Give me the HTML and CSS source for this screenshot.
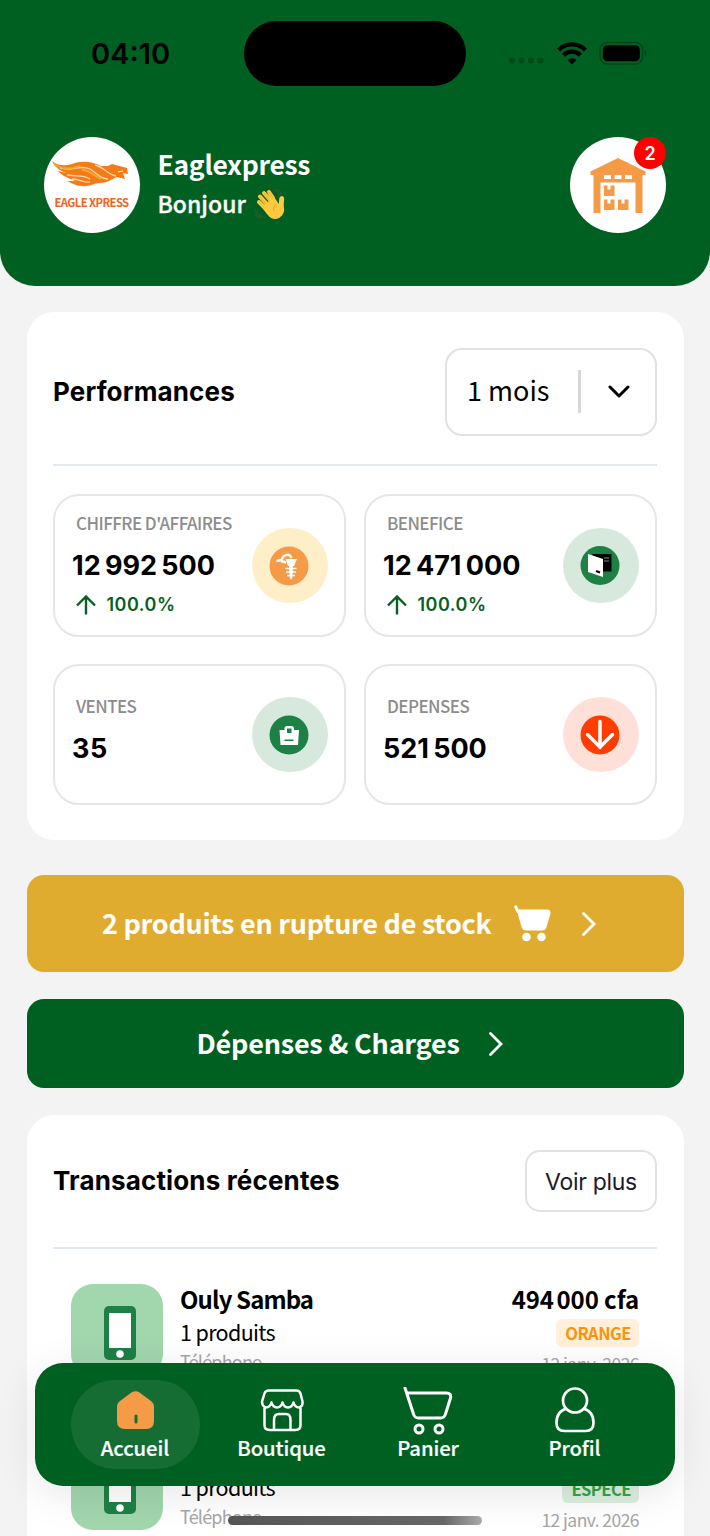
FILE: index.html
```html
<!DOCTYPE html>
<html lang="fr">
<head>
    <meta charset="UTF-8">
    <meta name="viewport" content="width=device-width, initial-scale=1.0">
    <title>Accueil</title>
    <link rel="stylesheet" href="styles.css">
</head>
<body>
    <div class="screen">
        <header class="header">
            <div class="status-bar">
                <span class="time">04:10</span>
                <div class="island"></div>
                <div class="status-icons">
                    <svg width="36" height="24" viewBox="0 0 36 24" fill="#004a1a"><circle cx="3" cy="19.500" r="3"/><circle cx="12.500" cy="19.500" r="3"/><circle cx="22" cy="19.500" r="3"/><circle cx="31.500" cy="19.500" r="3"/></svg>
                    <svg width="30" height="24" viewBox="0 0 30 24" fill="none" stroke="#000" stroke-width="4.200"><path d="M1.600 8.900a19 19 0 0 1 26.800 0"/><path d="M6.500 14.200a12 12 0 0 1 17 0"/><path d="M15 23.600l-4.400-4.500a6.300 6.300 0 0 1 8.800 0z" fill="#000" stroke="none"/></svg>
                    <svg width="50" height="24" viewBox="0 0 50 24"><rect x="1" y="1.500" width="42.500" height="21.500" rx="7" fill="none" stroke="#00451a" stroke-width="1.600"/><rect x="3.800" y="4.200" width="37" height="16" rx="4.500"/><path d="M45.500 9c3.300 1 3.300 5.500 0 6.500z" fill="#00451a"/></svg>
                </div>
            </div>
            <div class="profile">
                <div class="avatar">
                    <svg width="78" height="28" viewBox="0 0 78 28">
                        <path d="M0 0C6 5 13 5 20 3C30-1 42 1 49 5L56 5L60 3L75 7L76 13L71 12L73 18L65 16C58 19 55 22 47 22C40 23 36 26 30 25C24 25 20 22 15 20L23 20C16 17 9 14 6 10L14 12C7 9 3 6 0 0Z" fill="#f47b16"/>
                        <path d="M8 7C22 11 27 3 38 8C46 13 48 18 56 18M15 14C25 16 30 13 38 18M43 4C52 6 56 14 64 15M20 18C29 18 31 22 38 21" fill="none" stroke="#ffd9a6" stroke-width="1.300"/>
                        <path d="M2 3C11 9 19 8 28 5M30 9C39 9 42 15 49 18" fill="none" stroke="#f9a62d" stroke-width="2"/>
                        <path d="M66 11l5-1" stroke="#fff" stroke-width="1.200"/>
                    </svg>
                    <span class="logo-text">EAGLE XPRESS</span>
                </div>
                <div class="greeting">
                    <div class="shop-name">Eaglexpress</div>
                    <div class="hello"><span>Bonjour</span>
                        <svg class="wave" width="32" height="32" viewBox="0 0 32 32" role="img" aria-label="Salut">
                            <g fill="none" stroke-linecap="round">
                                <path d="M16 11L10 4M12 14L6 7.500M19 9L15 3M10 18L5 13" stroke="#ffc83d" stroke-width="4"/>
                                <path d="M18 15L10 4M14 18L6 7.500M21 12L15 3M12 20L5 13" stroke="#e8a01f" stroke-width=".6"/>
                            </g>
                            <path d="M10 16L20 8L25 15C25 10 25 7 28 7C32 8 29 13 30 19C31 25 26 30 21 30C16 30 13 25 9 20Z" fill="#ffc83d"/>
                            <path d="M22 15c-2 2-3 4-2 7" fill="none" stroke="#e8a01f"/>
                            <path d="M19 1c4 1 6 4 7 7M22 0c4 2 5 4 6 6M1 20c1 4 4 7 8 8M1 25c2 3 4 4 6 4" fill="none" stroke="#35552f" stroke-width="1.200"/>
                        </svg>
                    </div>
                </div>
                <div class="stock-button">
                    <svg width="56" height="56" viewBox="0 0 56 56" fill="#f59a46">
                        <path fill-rule="evenodd" d="M28 0L55.500 13.500V17H52.500V55H45.500V24.500H10.500V55H3.500V17H.5V13.500ZM14 17v4h7v-4ZM24.500 17v4h7v-4ZM35 17v4h7v-4Z"/>
                        <path d="M14 27.500h3.500v4h3v-4h4v10.500H14zM14 41.500h3.500v4h3v-4h4V52H14zM28 41.500h3.500v4h3v-4h4V52H28z"/>
                    </svg>
                    <span class="badge">2</span>
                </div>
            </div>
        </header>

        <section class="card performances">
            <div class="card-head">
                <h2>Performances</h2>
                <div class="select">
                    <span class="select-text">1 mois</span>
                    <span class="divider"></span>
                    <svg width="22" height="14" viewBox="0 0 22 14"><path d="M2 2l9 9 9-9" fill="none" stroke="#000" stroke-width="3" stroke-linecap="round" stroke-linejoin="round"/></svg>
                </div>
            </div>
            <div class="stats">
                <div class="stat">
                    <div class="figures">
                        <div class="label">CHIFFRE D'AFFAIRES</div>
                        <div class="value">12&#8239;992&#8239;500</div>
                        <div class="trend"><svg width="20" height="20" viewBox="0 0 20 20"><path d="M10 19.500V1.500M1 10.500L10 1.500 19 10.500" fill="none" stroke="#086020" stroke-width="2.400"/></svg><span>100.0%</span></div>
                    </div>
                    <div class="bubble yellow">
                        <svg width="40" height="40" viewBox="0 0 40 40"><circle cx="20" cy="20" r="19.500" fill="#f59a46"/><path d="M16.500 13H28l-3 7h-6zM20 19h4l-.5 12-1.500 3-1.500-3z" fill="#fff"/><path d="M7.500 15l5-1c2-6 8-7 10-2M12 15l5 1.500" fill="none" stroke="#fff" stroke-width="2.400"/><path d="M16.500 22.500h11M17 26h10M18 29.500h8" fill="none" stroke="#fff" stroke-width="1.500"/></svg>
                    </div>
                </div>
                <div class="stat">
                    <div class="figures">
                        <div class="label">BENEFICE</div>
                        <div class="value">12&#8239;471&#8239;000</div>
                        <div class="trend"><svg width="20" height="20" viewBox="0 0 20 20"><path d="M10 19.500V1.500M1 10.500L10 1.500 19 10.500" fill="none" stroke="#086020" stroke-width="2.400"/></svg><span>100.0%</span></div>
                    </div>
                    <div class="bubble green">
                        <svg width="40" height="40" viewBox="0 0 40 40"><circle cx="20" cy="19.500" r="19.500" fill="#1d8045"/><path d="M12 8h19.500v17.500H22z"/><path d="M8 8l15 5v18L8 26z" fill="#fff"/><path d="M24 12h5M24 15h5" stroke="#7d8a83"/><path d="M16 25l4 1.500" stroke="#000" stroke-width="2"/></svg>
                    </div>
                </div>
                <div class="stat">
                    <div class="figures short">
                        <div class="label">VENTES</div>
                        <div class="value">35</div>
                    </div>
                    <div class="bubble green">
                        <svg width="40" height="40" viewBox="0 0 40 40"><circle cx="20" cy="20" r="19.500" fill="#1d8045"/><path fill-rule="evenodd" d="M10.500 15h5V13.500q0-2.500 2.500-2.500h4.500Q25 11 25 13.500V15h5L29 30H11.500zM18 13.500v4.500h4.500v-4.500zM15.500 24.500v1.500h9v-1.500z" fill="#fff"/></svg>
                    </div>
                </div>
                <div class="stat">
                    <div class="figures short">
                        <div class="label">DEPENSES</div>
                        <div class="value">521&#8239;500</div>
                    </div>
                    <div class="bubble red">
                        <svg width="40" height="40" viewBox="0 0 40 40"><circle cx="20" cy="20" r="19.500" fill="#ff3d00"/><path d="M20 6.500v26M7.500 19.500L20 32l12.500-12.500" fill="none" stroke="#fff" stroke-width="3.500" stroke-linecap="round"/></svg>
                    </div>
                </div>
            </div>
        </section>

        <div class="banner out-of-stock">
            <span class="stock-text">2 produits en rupture de stock</span>
            <svg class="cart" width="37" height="37" viewBox="0 0 37 37" fill="#fff"><path d="M1.800 1.800L3.800 6.500" stroke="#fff" stroke-width="3" stroke-linecap="round"/><path d="M2.500 4.500H33q4 0 3.500 4l-4 13.500q-1 3.500-4 3.500H12q-3 0-4.300-3z"/><circle cx="12.500" cy="32" r="4.300"/><circle cx="27.500" cy="32" r="4.300"/></svg>
            <svg width="14" height="24" viewBox="0 0 14 24"><path d="M1.500 1.500L12 12 1.500 22.500" fill="none" stroke="#fff" stroke-width="2.800" stroke-linecap="round"/></svg>
        </div>

        <div class="banner expenses">
            <span class="expenses-text">Dépenses &amp; Charges</span>
            <svg width="14" height="24" viewBox="0 0 14 24"><path d="M1.500 1.500L12 12 1.500 22.500" fill="none" stroke="#fff" stroke-width="2.800" stroke-linecap="round"/></svg>
        </div>

        <section class="card transactions">
            <div class="card-head">
                <h2>Transactions récentes</h2>
                <div class="more">Voir plus</div>
            </div>
            <div class="row">
                <div class="thumb"><svg width="32" height="54" viewBox="0 0 32 54"><rect width="32" height="54" rx="5" fill="#1d8045"/><path fill="#fff" d="M5 7h22v35H5z"/><circle cx="16" cy="48" r="3.800" fill="#fff"/></svg></div>
                <div class="who">
                    <div class="name">Ouly Samba</div>
                    <div class="qty">1 produits</div>
                    <div class="category">Téléphone</div>
                </div>
                <div class="amounts">
                    <div class="amount">494&#8239;000 cfa</div>
                    <div class="tag orange">ORANGE</div>
                    <div class="date">12 janv. 2026</div>
                </div>
            </div>
            <div class="row">
                <div class="thumb"><svg width="32" height="54" viewBox="0 0 32 54"><rect width="32" height="54" rx="5" fill="#1d8045"/><path fill="#fff" d="M5 7h22v35H5z"/><circle cx="16" cy="48" r="3.800" fill="#fff"/></svg></div>
                <div class="who second">
                    <div class="qty">1 produits</div>
                    <div class="category">Téléphone</div>
                </div>
                <div class="amounts second">
                    <div class="tag cash">ESPECE</div>
                    <div class="date">12 janv. 2026</div>
                </div>
            </div>
        </section>

        <nav class="tab-bar">
            <div class="tab active">
                <svg width="44" height="48" viewBox="0 0 44 48"><path d="M4 20q0-4 3-6L18.500 5.500q4-2.500 8 0L38 14q3 2 3 6v14q0 8-8 8H12q-8 0-8-8z" fill="#f59a46"/><path d="M23 29v6" stroke="#156d34" stroke-width="3" stroke-linecap="round"/></svg>
                <span>Accueil</span>
            </div>
            <div class="tab">
                <svg width="44" height="48" viewBox="0 0 44 48" fill="none" stroke="#fff" stroke-width="2.500" stroke-linejoin="round"><path d="M9.500 3.500h27q3 0 4 3l2 8q.5 5-3.500 6-4 0-5.500-5-1.500 5-5.500 5t-5.500-5q-1.500 5-5.500 5t-5.500-5q-1.500 5-5.500 5-4-1-4-6l2.500-8q1-3 4-3zM4.500 21v17q0 5 5 5h26q5 0 5-5V21M14 43V33q0-6 5-6h7q4.500 0 4.500 6v10"/></svg>
                <span>Boutique</span>
            </div>
            <div class="tab">
                <svg width="50" height="48" viewBox="0 1 50 48" fill="none" stroke="#fff" stroke-width="3" stroke-linecap="round" stroke-linejoin="round"><path d="M2 2l8.500 26q1 4 5 4h22q4 0 5-4l5-16q1-5-4-5H4"/><circle cx="16" cy="43" r="4"/><circle cx="36" cy="43" r="4"/></svg>
                <span>Panier</span>
            </div>
            <div class="tab">
                <svg width="44" height="48" viewBox="0 0 44 48" fill="none" stroke="#fff" stroke-width="2.700"><circle cx="22" cy="13.500" r="12"/><path d="M14 21.500Q3.500 24 3.500 36q0 8 8 8h21q8 0 8-8 0-12-10.500-14.500"/></svg>
                <span>Profil</span>
            </div>
        </nav>
        <div class="home-indicator"></div>
    </div>
</body>
</html>
```
FILE: styles.css
```css
* {
    box-sizing: border-box;
}

body {
    margin: 0;
    font-family: "Noto Sans CJK JP", "Noto Sans", sans-serif;
    background-color: #f3f3f3;
    color: #000;
}

svg {
    display: block;
    flex-shrink: 0;
}

.screen {
    position: relative;
    width: 710px;
    height: 1536px;
    overflow: hidden;
}

/* header */
.header {
    height: 285.5px;
    padding: 21px 44px 0;
    background-color: #006022;
    border-radius: 0 0 35px 35px;
}

.status-bar {
    display: flex;
    height: 64.5px;
    align-items: center;
}

.time {
    width: 200px;
    padding: 2px 0 0 47px;
    font-family: Inter, sans-serif;
    font-size: 29px;
    font-weight: 600;
    line-height: 36px;
}

.island {
    width: 222px;
    height: 64.5px;
    border-radius: 33px;
    background-color: #000;
}

.status-icons {
    display: flex;
    gap: 12px;
    margin-left: 43px;
}

.profile {
    display: flex;
    height: 96px;
    margin-top: 51.5px;
}

.avatar, .stock-button {
    display: flex;
    width: 96px;
    height: 96px;
    border-radius: 50%;
    background-color: #fff;
}

.avatar {
    flex-direction: column;
    align-items: center;
    padding: 24px 2px 0 0;
}

.logo-text {
    margin: 4px 0 0 1px;
    font-size: 11.3px;
    font-weight: 700;
    line-height: 18px;
    letter-spacing: -0.6px;
    white-space: nowrap;
    color: #f2631b;
}

.greeting {
    flex: 1;
    margin-left: 17.5px;
    color: #fff;
}

.shop-name {
    margin-top: 8px;
    font-size: 26.5px;
    font-weight: 700;
    line-height: 37px;
    letter-spacing: -0.3px;
}

.hello {
    display: flex;
    gap: 8px;
    margin-top: 3px;
    font-size: 23px;
    font-weight: 500;
    line-height: 36px;
    -webkit-text-stroke: 0.3px #fff;
}

.wave {
    margin-top: 4px;
}

.stock-button {
    position: relative;
    align-items: center;
    justify-content: center;
    padding-top: 2px;
}

.badge {
    position: absolute;
    top: 0;
    right: 0;
    width: 32px;
    height: 32px;
    border-radius: 50%;
    background-color: #f00;
    color: #fff;
    font-family: Inter, sans-serif;
    font-size: 18px;
    font-weight: 600;
    line-height: 33px;
    text-align: center;
}

/* cards */
.card {
    margin: 26.5px 26.5px 0;
    padding: 0 26.5px;
    border-radius: 27px;
    background-color: #fff;
}

.performances {
    height: 527.5px;
}

.card-head {
    display: flex;
    align-items: center;
    justify-content: space-between;
    height: 154px;
    padding-top: 7px;
    border-bottom: 2px solid #e0e9f5;
}

h2 {
    margin: 0;
    font-family: Inter, sans-serif;
    font-size: 26px;
    font-weight: 700;
    line-height: 32px;
    letter-spacing: 0.15px;
}

.select {
    display: flex;
    align-items: center;
    width: 212px;
    height: 88px;
    padding-left: 20px;
    border: 2px solid #e2e2e2;
    border-radius: 17px;
    font-size: 27px;
    line-height: 40px;
}

.select-text {
    width: 111px;
    padding-bottom: 3px;
}

.divider {
    width: 3px;
    height: 43px;
    margin-right: 27px;
    background-color: #d8d8d8;
}

.stats {
    display: grid;
    grid-template-columns: 293px 293px;
    grid-template-rows: 143px 141px;
    gap: 27px 18px;
    margin-top: 28px;
}

.stat {
    display: flex;
    align-items: center;
    justify-content: space-between;
    padding: 0 16.5px 0 17px;
    border: 2px solid #e6e6e6;
    border-radius: 26px;
}

.figures {
    margin-top: -6px;
}

.short {
    margin-top: -10px;
}

.label {
    margin-left: 4px;
    font-size: 17px;
    font-weight: 500;
    line-height: 26px;
    letter-spacing: -0.55px;
    white-space: nowrap;
    color: #8c8c8c;
}

.value {
    margin-top: 12px;
    font-family: Inter, sans-serif;
    font-size: 27px;
    font-weight: 700;
    line-height: 36px;
    letter-spacing: 0.45px;
}

.trend {
    display: flex;
    align-items: center;
    gap: 11px;
    margin: 10px 0 0 3.5px;
    color: #086020;
    font-family: Inter, sans-serif;
    font-size: 18px;
    font-weight: 600;
    line-height: 22px;
    letter-spacing: 0.5px;
}

.bubble {
    display: flex;
    align-items: center;
    justify-content: center;
    width: 75.5px;
    height: 75.5px;
    padding-right: 1px;
    border-radius: 50%;
}

.yellow {
    background-color: #ffefc9;
}

.green {
    background-color: #d7e8dd;
}

.red {
    background-color: #ffe0d9;
}

/* banners */
.banner {
    display: flex;
    align-items: center;
    margin: 0 26.5px;
    border-radius: 17px;
    color: #fff;
    font-size: 27px;
    font-weight: 700;
    white-space: nowrap;
}

.out-of-stock {
    height: 97px;
    margin-top: 35.5px;
    padding-left: 75.5px;
    background-color: #e0ac2f;
}

.stock-text {
    width: 412px;
    padding-bottom: 3px;
    letter-spacing: -0.28px;
}

.cart {
    margin-right: 31px;
}

.expenses {
    height: 89px;
    margin-top: 27px;
    padding-left: 170px;
    background-color: #006022;
}

.expenses-text {
    width: 292px;
    padding-bottom: 3px;
    letter-spacing: -0.22px;
}

/* transactions */
.transactions {
    height: 460px;
}

.transactions .card-head {
    height: 134px;
    padding-top: 0;
}

.more {
    width: 132px;
    height: 62px;
    border: 2px solid #e2e2e2;
    border-radius: 15px;
    color: #1c1a2e;
    font-family: Inter, sans-serif;
    font-size: 23px;
    line-height: 60px;
    letter-spacing: -0.3px;
    text-align: center;
}

.row {
    display: flex;
    height: 92px;
    margin: 35px 18px 62.5px;
}

.thumb {
    display: flex;
    align-items: center;
    justify-content: center;
    width: 92px;
    padding-left: 5px;
    padding-top: 6px;
    border-radius: 22px;
    background-color: #a2d6ad;
}

.who {
    flex: 1;
    margin-left: 17px;
}

.name, .amount {
    height: 30px;
    font-size: 24px;
    font-weight: 700;
    line-height: 29px;
}

.name {
    letter-spacing: -0.9px;
}

.amount {
    letter-spacing: -0.1px;
}

.qty {
    height: 34px;
    font-size: 21.5px;
    line-height: 35px;
    letter-spacing: -0.65px;
}

.category {
    font-size: 18px;
    line-height: 26px;
    letter-spacing: -0.8px;
    color: #a6a6a6;
}

.amounts {
    display: flex;
    flex-direction: column;
    align-items: flex-end;
}

.tag {
    height: 28px;
    margin-top: 6px;
    padding: 0 8px 0 9px;
    border-radius: 6px;
    font-size: 16.5px;
    font-weight: 700;
    line-height: 28px;
    letter-spacing: -0.5px;
}

.orange {
    background-color: #ffefdb;
    color: #ff920a;
}

.cash {
    background-color: #dcefdf;
    color: #2fa544;
}

.date {
    margin-top: 4px;
    font-size: 17.5px;
    line-height: 26px;
    letter-spacing: -0.55px;
    color: #a6a6a6;
}

.second {
    padding-top: 31px;
}

/* bottom navigation */
.tab-bar {
    position: absolute;
    left: 35px;
    top: 1362.5px;
    display: grid;
    grid-template-columns: repeat(4, 129px);
    gap: 17.5px;
    width: 639.5px;
    height: 123.5px;
    padding: 17.5px 35.5px;
    border-radius: 28px;
    background-color: #006022;
    box-shadow: 0 8px 40px rgba(0, 0, 0, 0.1);
}

.tab {
    display: flex;
    flex-direction: column;
    align-items: center;
    height: 88.5px;
    padding-top: 7px;
    border-radius: 44px;
    color: #fff;
    font-size: 20.3px;
    font-weight: 500;
    letter-spacing: -0.1px;
}

.tab span {
    line-height: 25px;
    -webkit-text-stroke: 0.2px #fff;
}

.active {
    background-color: #156d34;
}

.home-indicator {
    position: absolute;
    left: 228px;
    top: 1516px;
    width: 254px;
    height: 9px;
    border-radius: 5px;
    background: linear-gradient(90deg, #555, #666 85%, #aaa);
}
```
